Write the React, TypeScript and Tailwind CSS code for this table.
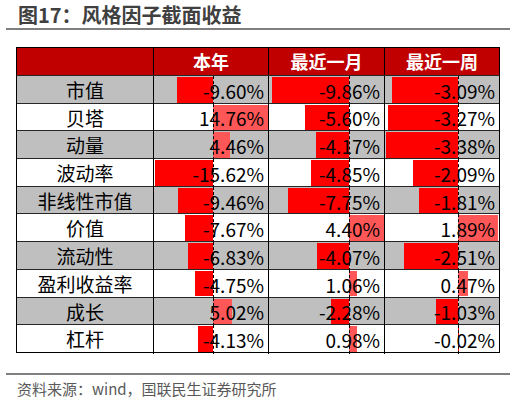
import React from 'react';

type Row = { name: string; vals: [number, number, number] };

const rows: Row[] = [
    { name: '市值', vals: [-9.6, -9.86, -3.09] },
    { name: '贝塔', vals: [14.76, -5.6, -3.27] },
    { name: '动量', vals: [4.46, -4.17, -3.38] },
    { name: '波动率', vals: [-15.62, -4.85, -2.09] },
    { name: '非线性市值', vals: [-9.46, -7.75, -1.81] },
    { name: '价值', vals: [-7.67, 4.4, 1.89] },
    { name: '流动性', vals: [-6.83, -4.07, -2.51] },
    { name: '盈利收益率', vals: [-4.75, 1.06, 0.47] },
    { name: '成长', vals: [5.02, -2.28, -1.03] },
    { name: '杠杆', vals: [-4.13, 0.98, -0.02] },
];

// axis offset inside each cell and px per percent
const axis = [59, 80, 73];
const scale = [3.7, 7.85, 21.4];

function BarCell({ v, col }: { v: number; col: number }) {
    const len = Math.abs(v) * scale[col];
    const left = v < 0 ? axis[col] - len : axis[col];
    return (
        <div className="relative h-full border-l border-black flex items-center justify-end pr-[4px]">
            <div
                className={`absolute top-[1px] bottom-[2px] ${v < 0 ? 'bg-[#ff0000]' : 'bg-[#ff5757]'}`}
                style={{ left, width: len }}
            ></div>
            <div
                className="absolute top-0 bottom-0 border-l border-dashed border-black"
                style={{ left: axis[col] }}
            ></div>
            <span className="relative z-10 text-[19px] leading-none text-black">{v.toFixed(2)}%</span>
        </div>
    );
}

export default function App() {
    return (
        <main className="w-[516px] h-[401px] bg-white font-['Noto_Sans_CJK_SC','Noto_Sans',sans-serif] overflow-hidden">
            {/* Title */}
            <div className="ml-[6px] w-[504px] border-b-2 border-[#7f7f7f] pl-[12px] pt-[3px] h-[30px]">
                <h1 className="text-[20px] leading-[24px] font-bold text-[#404040]">图17：风格因子截面收益</h1>
            </div>

            {/* Table */}
            <div className="ml-[16px] mt-[17px] w-[484px] border border-black">
                <div className="grid grid-cols-[136px_115px_116px_115px] h-[27px] bg-[#c00000] text-white font-bold text-[18px]">
                    <div></div>
                    <div className="border-l border-black flex items-center justify-center">本年</div>
                    <div className="border-l border-black flex items-center justify-center">最近一月</div>
                    <div className="border-l border-black flex items-center justify-center">最近一周</div>
                </div>
                {rows.map((r, i) => (
                    <div
                        key={r.name}
                        className={`grid grid-cols-[136px_115px_116px_115px] h-[27.7px] border-t border-[#262626] ${i % 2 === 0 ? 'bg-[#bfbfbf]' : 'bg-white'}`}
                    >
                        <div className="flex items-center justify-center text-[19px] text-black">{r.name}</div>
                        <BarCell v={r.vals[0]} col={0} />
                        <BarCell v={r.vals[1]} col={1} />
                        <BarCell v={r.vals[2]} col={2} />
                    </div>
                ))}
            </div>

            {/* Source */}
            <div className="ml-[6px] mt-[20px] w-[504px] border-t-2 border-[#7f7f7f] pl-[11px] pt-[3px]">
                <p className="text-[15px] text-[#595959]">资料来源：wind，国联民生证券研究所</p>
            </div>
        </main>
    );
}
